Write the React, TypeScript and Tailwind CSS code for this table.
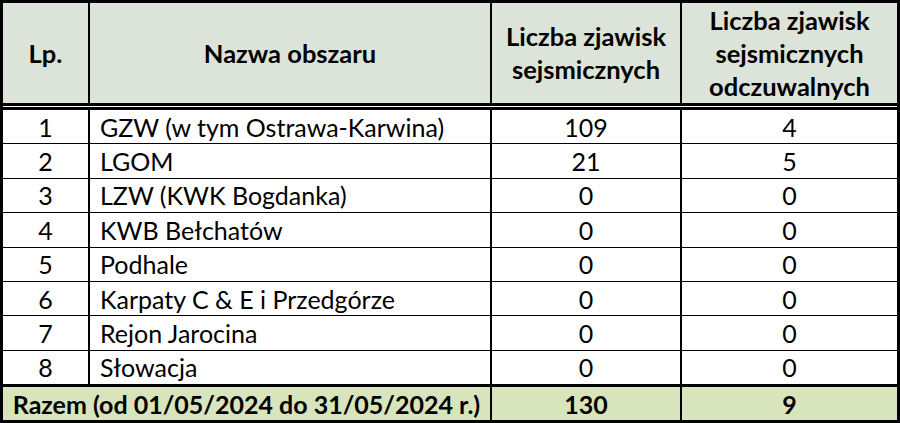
const rows = [
  { lp: "1", name: "GZW (w tym Ostrawa-Karwina)", all: "109", felt: "4" },
  { lp: "2", name: "LGOM", all: "21", felt: "5" },
  { lp: "3", name: "LZW (KWK Bogdanka)", all: "0", felt: "0" },
  { lp: "4", name: "KWB Bełchatów", all: "0", felt: "0" },
  { lp: "5", name: "Podhale", all: "0", felt: "0" },
  { lp: "6", name: "Karpaty C & E i Przedgórze", all: "0", felt: "0" },
  { lp: "7", name: "Rejon Jarocina", all: "0", felt: "0" },
  { lp: "8", name: "Słowacja", all: "0", felt: "0" },
];

const cols = "grid grid-cols-[87px_402px_190px_1fr]";

export default function App() {
  return (
    <div className="w-[900px] h-[423px] bg-white font-['Lato',sans-serif] text-black">
      <div className="flex h-full flex-col border-[3px] border-black">
        {/* header */}
        <div className={`${cols} h-[103px] shrink-0 border-b-[3px] border-black bg-[#dce3d9] text-[25.5px] font-bold leading-[33px]`}>
          <div className="flex items-center justify-center border-r-2 border-black">Lp.</div>
          <div className="flex items-center justify-center border-r-2 border-black">Nazwa obszaru</div>
          <div className="flex items-center justify-center border-r-2 border-black text-center">
            Liczba zjawisk
            <br />
            sejsmicznych
          </div>
          <div className="flex items-center justify-center text-center">
            Liczba zjawisk
            <br />
            sejsmicznych
            <br />
            odczuwalnych
          </div>
        </div>

        {/* body */}
        <div className="mt-px flex h-[277px] shrink-0 flex-col border-t-[3px] border-black text-[25px] leading-[28px]">
          {rows.map((r, i) => (
            <div
              key={r.lp}
              className={`${cols} min-h-0 flex-1 ${i < rows.length - 1 ? "border-b border-black" : ""}`}
            >
              <div className="flex items-center justify-center border-r-2 border-black">{r.lp}</div>
              <div className="flex items-center border-r-2 border-black pl-[10px]">{r.name}</div>
              <div className="flex items-center justify-center border-r-2 border-black">{r.all}</div>
              <div className="flex items-center justify-center">{r.felt}</div>
            </div>
          ))}
        </div>

        {/* total */}
        <div className="grid min-h-0 flex-1 grid-cols-[489px_190px_1fr] border-t-[3px] border-black bg-[#d8e4bc] text-[25px] font-bold leading-[28px]">
          <div className="flex items-center justify-center border-r-2 border-black">
            Razem (od 01/05/2024 do 31/05/2024 r.)
          </div>
          <div className="flex items-center justify-center border-r-2 border-black">130</div>
          <div className="flex items-center justify-center">9</div>
        </div>
      </div>
    </div>
  );
}
